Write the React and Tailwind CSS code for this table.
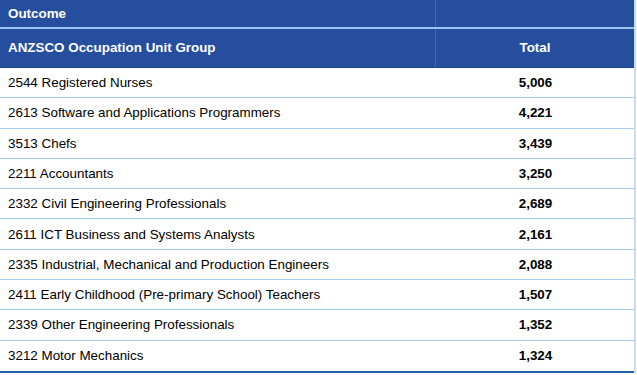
const rows = [
  ['2544 Registered Nurses', '5,006'],
  ['2613 Software and Applications Programmers', '4,221'],
  ['3513 Chefs', '3,439'],
  ['2211 Accountants', '3,250'],
  ['2332 Civil Engineering Professionals', '2,689'],
  ['2611 ICT Business and Systems Analysts', '2,161'],
  ['2335 Industrial, Mechanical and Production Engineers', '2,088'],
  ['2411 Early Childhood (Pre-primary School) Teachers', '1,507'],
  ['2339 Other Engineering Professionals', '1,352'],
  ['3212 Motor Mechanics', '1,324'],
];

export default function App() {
  return (
    <div className="w-[637px] h-[375px] bg-white font-['Liberation_Sans',Arial,sans-serif] text-[13.4px] text-black">
      <div className="w-[636px] border-r-2 border-[#c4dcf4]">
        {/* Header: Outcome */}
        <div className="flex h-[27px] bg-[#254e9e] text-white font-bold">
          <div className="w-[436px] border-r border-[#3a6dbf] flex items-center px-2 pt-[2px]">Outcome</div>
          <div className="flex-1" />
        </div>
        <div className="h-[2px] bg-[#9cc2ee]" />
        {/* Header: columns */}
        <div className="flex h-[39px] bg-[#254e9e] text-white font-bold border-b border-[#1d4590]">
          <div className="w-[436px] border-r border-[#3a6dbf] flex items-center px-2 pt-[1px]">ANZSCO Occupation Unit Group</div>
          <div className="flex-1 flex items-center justify-center pt-[1px]">Total</div>
        </div>
        {/* Body */}
        {rows.map(([name, total], i) => (
          <div
            key={name}
            className={
              'flex h-[30.3px] items-center pt-[1px] ' +
              (i < rows.length - 1 ? 'border-b border-[#a9cbee]' : '')
            }
          >
            <div className="w-[437px] px-2">{name}</div>
            <div className="flex-1 text-center font-bold">{total}</div>
          </div>
        ))}
        <div className="h-[2px] bg-[#2161ab]" />
      </div>
    </div>
  );
}
